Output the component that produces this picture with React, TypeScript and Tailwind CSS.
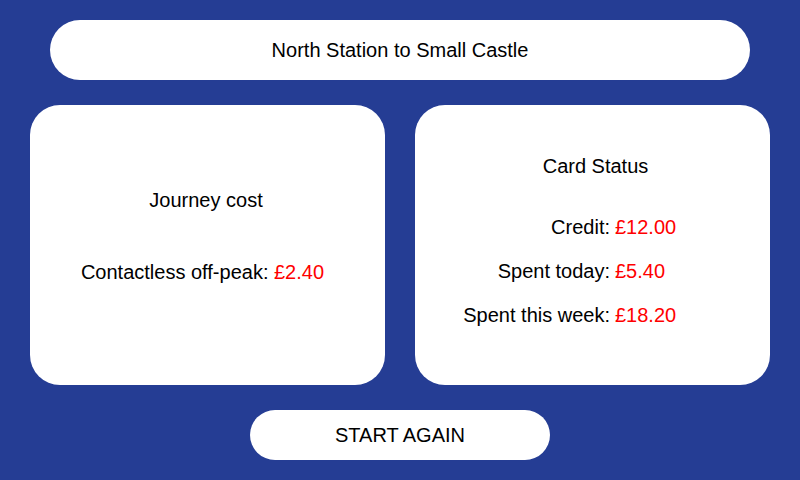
export default function App() {
  return (
    <div
      className="w-[800px] h-[480px] bg-[#253d94] flex flex-col pt-[20px] text-black text-[20px] leading-[24px]"
      style={{ fontFamily: '"Liberation Sans", Arial, sans-serif' }}
    >
      <div className="mx-[50px] h-[60px] bg-white rounded-full flex items-center justify-center">
        North Station to Small Castle
      </div>
      <div className="mt-[25px] px-[30px] flex gap-[30px] h-[280px]">
        <div className="flex-1 bg-white rounded-[30px] flex flex-col items-center pt-[83px]">
          <div className="pr-[3px]">Journey cost</div>
          <div className="mt-[48px] pr-[10px]">
            Contactless off-peak: <span className="text-[#ff0000]">£2.40</span>
          </div>
        </div>
        <div className="flex-1 bg-white rounded-[30px] flex flex-col pt-[49px]">
          <div className="text-center pl-[6px]">Card Status</div>
          <div className="mt-[37px] grid grid-cols-[195px_1fr] gap-y-[20px]">
            <div className="text-right">Credit:</div>
            <div className="pl-[5px] text-[#ff0000]">£12.00</div>
            <div className="text-right">Spent today:</div>
            <div className="pl-[5px] text-[#ff0000]">£5.40</div>
            <div className="text-right">Spent this week:</div>
            <div className="pl-[5px] text-[#ff0000]">£18.20</div>
          </div>
        </div>
      </div>
      <div className="mt-[25px] mx-auto w-[300px] h-[50px] bg-white rounded-full flex items-center justify-center">
        START AGAIN
      </div>
    </div>
  );
}
